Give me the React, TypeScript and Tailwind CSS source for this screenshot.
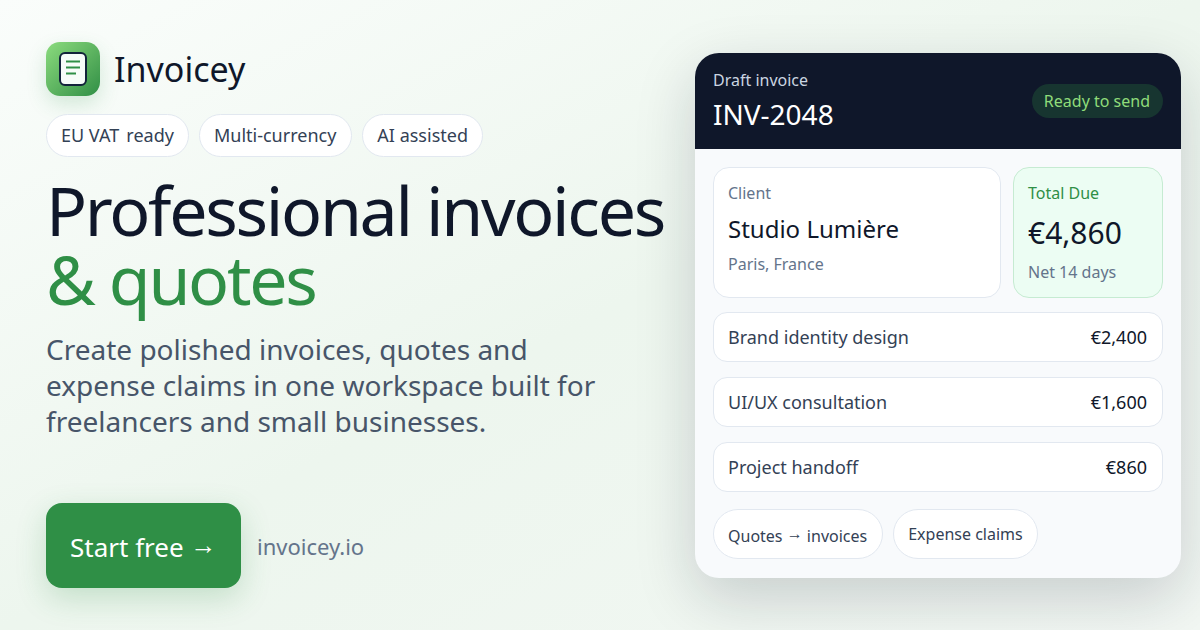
const lines = [
  { name: "Brand identity design", price: "€2,400" },
  { name: "UI/UX consultation", price: "€1,600" },
  { name: "Project handoff", price: "€860" },
];

function Arrow() {
  return <span className="inline-block -translate-y-[3px]">→</span>;
}

function Logo() {
  return (
    <div className="flex h-[54px] w-[54px] items-center justify-center rounded-[14px] bg-gradient-to-br from-[#8bdc7e] to-[#2f8f46] shadow-[0_8px_20px_rgba(47,143,70,0.18)]">
      <svg width="28" height="34" viewBox="0 0 28 34" fill="none">
        <rect x="1" y="1" width="26" height="32" rx="5" fill="#f6fcf8" stroke="#12233a" strokeWidth="2" />
        <path d="M7 9.5h14M7 15.5h14M7 21.5h10" stroke="#2f8f46" strokeWidth="2" />
      </svg>
    </div>
  );
}

export default function App() {
  return (
    <div className="flex h-[630px] w-[1200px] justify-between overflow-hidden bg-gradient-to-br from-[#fafdfb] via-[#edf6ee] to-[#f2f7f3] pl-[46px] pr-[19px] pt-[42px] font-['Noto_Sans',sans-serif]">
      <div className="flex w-[630px] flex-col items-start">
        <div className="flex items-center gap-[14px]">
          <Logo />
          <span className="text-[34px] leading-[54px] text-[#0f172a]">Invoicey</span>
        </div>
        <div className="mt-[18px] flex gap-[10px]">
          <span className="flex h-[43px] items-center rounded-full border border-[#e2e8f0] bg-white px-[14px] text-[18px] text-[#334155]">
            EU VAT<span className="ml-[2.5px]">&nbsp;ready</span>
          </span>
          <span className="flex h-[43px] items-center rounded-full border border-[#e2e8f0] bg-white pl-[14px] pr-[15px] text-[18px] text-[#334155]">
            Multi-currency
          </span>
          <span className="flex h-[43px] items-center rounded-full border border-[#e2e8f0] bg-white px-[14px] text-[18px] text-[#334155]">
            AI assisted
          </span>
        </div>
        <h1 className="mt-[18px] whitespace-nowrap text-[68px] leading-[69px] tracking-[-2.3px] text-[#0f172a]">
          Professional invoices
          <span className="block text-[#2f8f46]">&amp; quotes</span>
        </h1>
        <p className="mt-[18px] text-[28px] leading-[36px] text-[#475569]">
          Create polished invoices, quotes and
          <br />
          expense claims in one workspace built for
          <br />
          freelancers and small businesses.
        </p>
        <div className="mt-[64px] flex items-center gap-4">
          <div className="flex h-[85px] w-[195px] items-center rounded-[16px] bg-[#2f8f46] pl-[24px] pt-[3px] text-[26px] text-white shadow-[0_10px_30px_rgba(47,143,70,0.22)]">
            <span>Start free <Arrow /></span>
          </div>
          <span className="pt-[2px] text-[22px] text-[#64748b]">invoicey.io</span>
        </div>
      </div>

      <div className="mt-[11px] h-[525px] w-[486px] overflow-hidden rounded-[24px] bg-[#f8fafc] shadow-[0_20px_60px_rgba(15,23,42,0.18)]">
        <div className="flex h-[96px] items-center justify-between bg-[#0f172a] px-[18px]">
          <div>
            <div className="text-[16px] leading-[22px] text-[#cbd5e1]">Draft invoice</div>
            <div className="mt-[4px] text-[28px] leading-[38px] text-white">INV-2048</div>
          </div>
          <span className="rounded-full bg-[#173530] pl-[12px] pr-[13px] py-[6px] text-[16px] leading-[22px] text-[#8fdc7a]">Ready to send</span>
        </div>
        <div className="flex flex-col gap-[15px] px-[18px] pt-[18px]">
          <div className="-mb-px flex gap-3">
            <div className="h-[131px] flex-1 rounded-[16px] border border-[#e2e8f0] bg-white p-[14px]">
              <div className="text-[16px] leading-[22px] text-[#64748b]">Client</div>
              <div className="mt-[9px] text-[24px] leading-[32px] text-[#0f172a]">Studio Lumière</div>
              <div className="mt-[8px] text-[16px] leading-[22px] text-[#64748b]">Paris, France</div>
            </div>
            <div className="h-[131px] w-[150px] rounded-[16px] border border-[#c6ebd2] bg-[#ecfdf3] p-[14px]">
              <div className="text-[16px] leading-[22px] text-[#2f8f46]">Total Due</div>
              <div className="mt-[11px] text-[30px] leading-[36px] text-[#0f172a]">€4,860</div>
              <div className="mt-[10px] text-[16px] leading-[22px] text-[#64748b]">Net 14 days</div>
            </div>
          </div>
          {lines.map((line) => (
            <div key={line.name} className="flex h-[50px] items-center justify-between rounded-[14px] border border-[#e2e8f0] bg-white pl-[14px] pr-[15px] text-[18px] text-[#334155]">
              <span>{line.name}</span>
              <span className="text-[#0f172a]">{line.price}</span>
            </div>
          ))}
          <div className="flex gap-[10px] pt-[2px]">
            <span className="flex h-[50px] items-center rounded-full border border-[#e2e8f0] bg-white pl-[14px] pr-[15px] pt-[3px] text-[16px] text-[#334155]">
              <span>Quotes <Arrow /> invoices</span>
            </span>
            <span className="flex h-[50px] items-center rounded-full border border-[#e2e8f0] bg-white px-[14px] text-[16px] text-[#334155]">Expense claims</span>
          </div>
        </div>
      </div>
    </div>
  );
}
